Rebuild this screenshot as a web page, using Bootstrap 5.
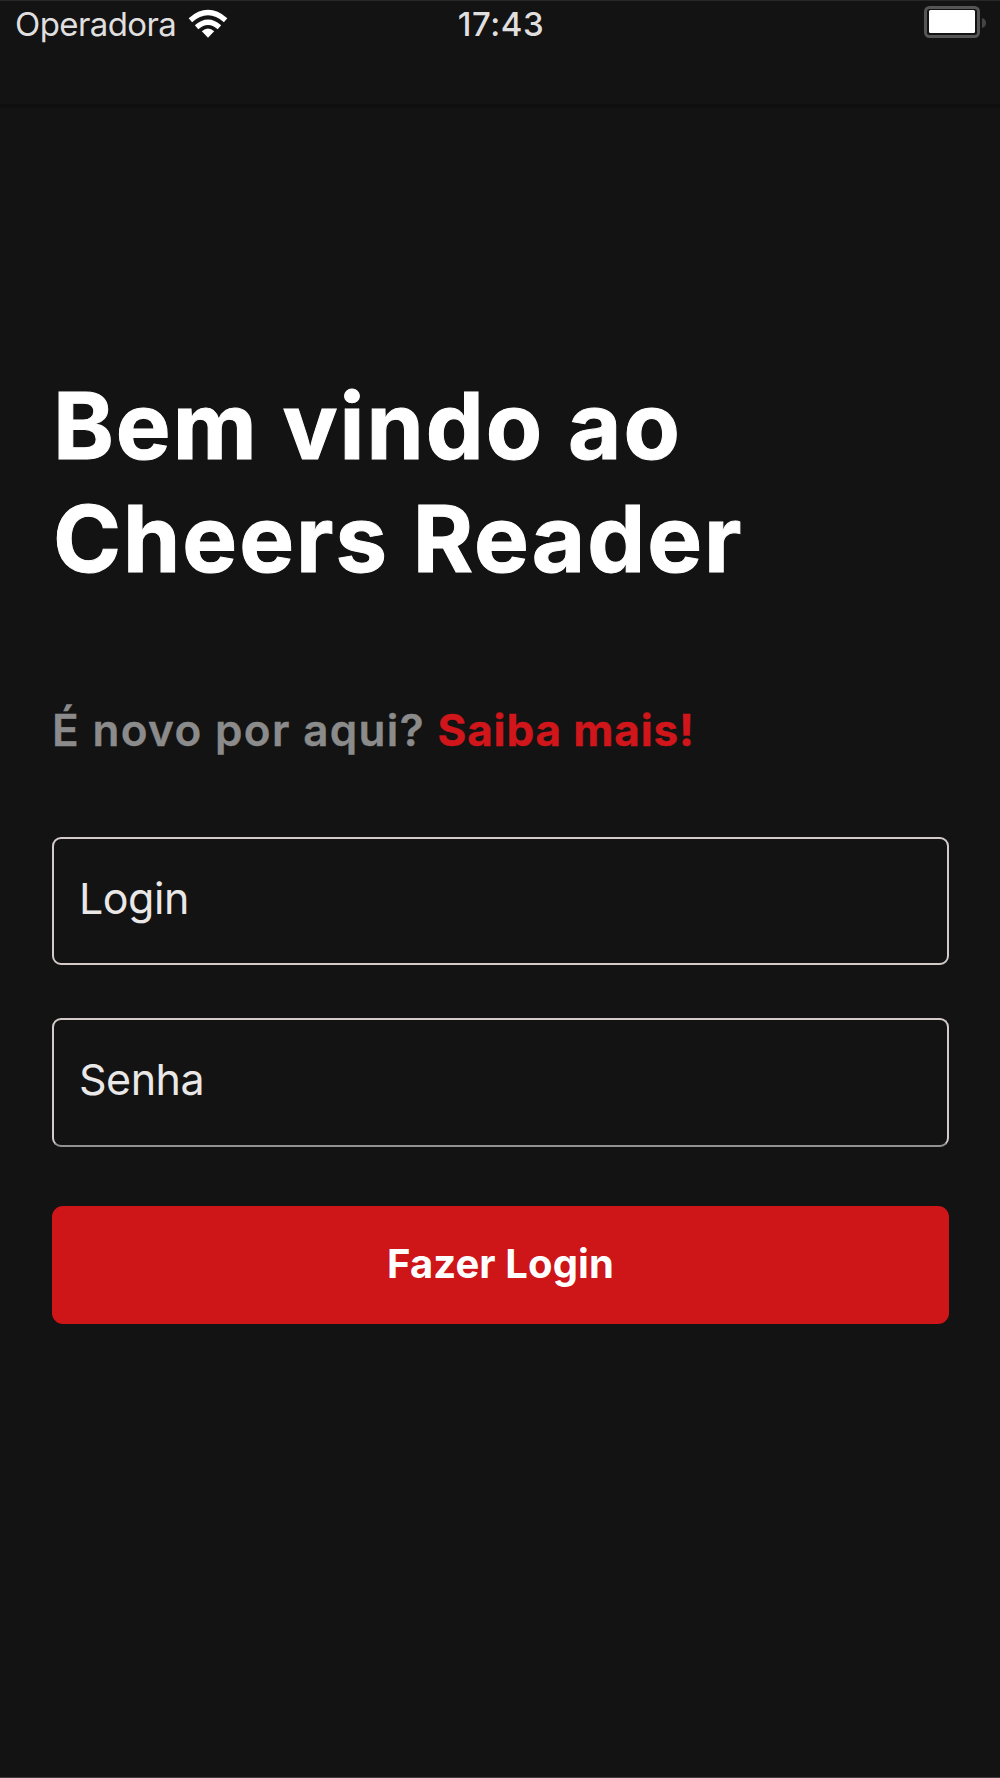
<!DOCTYPE html>
<html lang="pt-BR">
<head>
<meta charset="utf-8">
<meta name="viewport" content="width=device-width, initial-scale=1">
<title>Cheers Reader</title>
<link href="https://cdn.jsdelivr.net/npm/bootstrap@5.3.0/dist/css/bootstrap.min.css" rel="stylesheet">
<style>
  body { background: #131313; color: #fff; font-family: Inter, "Liberation Sans", sans-serif; }
  .screen { height: 1778px; border-top: 1px solid #262828; border-bottom: 1px solid #403c40; overflow: hidden; }
  .status-bar { height: 107px; padding: 3px 13px 0 15px; border-bottom: 4px solid #0f0f0f; font-size: 33px; line-height: 40px; color: #e0dfdf; }
  .carrier { letter-spacing: -.6px; }
  .wifi-icon { margin: 5px 0 0 12px; }
  .clock { font-weight: 500; letter-spacing: .5px; }
  .battery-icon { margin-top: 2px; }
  .login-view { padding: 261px 51px 0 52px; }
  .welcome { font-size: 92px; line-height: 113px; font-weight: 700; letter-spacing: 2px; padding-left: 1px; margin-bottom: 108px; -webkit-text-stroke: 1px #fff; }
  .intro { font-size: 44px; line-height: 54px; font-weight: 600; letter-spacing: 1.35px; color: #8c8b8b; margin-bottom: 80px; -webkit-text-stroke: .4px currentColor; }
  .intro a { color: #d0161a; font-weight: 700; letter-spacing: .9px; }
  .field.form-control { height: 128px; padding: 31px 25px 38px; border: 2px solid #d2cbc9; border-radius: 9px; background: #131313; color: #fff; font-size: 43px; line-height: 52px; letter-spacing: -.5px; }
  .field.form-control::placeholder { color: #eae7e7; opacity: 1; }
  .field-user { margin-bottom: 53px; }
  .field-pass.form-control { height: 129px; margin-bottom: 59px; border-bottom-color: #929292; }
  .btn-login { height: 118px; padding: 0 0 2px; border: 0; border-radius: 11px; background: #ce1518; color: #fff; font-size: 40px; line-height: 48px; font-weight: 700; letter-spacing: .1px; }
</style>
</head>
<body>
<div class="screen">
  <header class="status-bar row g-0 align-items-start">
    <div class="col d-flex align-items-start">
      <span class="carrier">Operadora</span>
      <svg class="wifi-icon" width="40" height="30" viewBox="0 0 42 31" fill="none" stroke="#fff" stroke-width="5.500">
        <path d="M2.500 11.500Q21-4.500 39.500 11.500"/>
        <path d="M9 19Q21 8.500 33 19"/>
        <path d="M14.500 23Q21 17.500 27.500 23L21 30Z" fill="#fff" stroke="none"/>
      </svg>
    </div>
    <div class="col-auto clock">17:43</div>
    <div class="col d-flex justify-content-end">
      <svg class="battery-icon" width="64" height="33" viewBox="0 0 64 33">
        <rect x="2.500" y="1.500" width="53" height="29" rx="4" fill="#131313" stroke="#555" stroke-width="3"/>
        <rect x="6" y="4" width="46" height="23" rx="1.500" fill="#fff"/>
        <path d="M59 12q4 1 4 5t-4 5Z" fill="#444"/>
      </svg>
    </div>
  </header>
  <main class="login-view">
    <h1 class="welcome">Bem vindo ao<br>Cheers Reader</h1>
    <p class="intro">É novo por aqui? <a href="#" class="text-decoration-none">Saiba mais!</a></p>
    <form>
      <input type="text" class="form-control field field-user" placeholder="Login" aria-label="Login">
      <input type="password" class="form-control field field-pass" placeholder="Senha" aria-label="Senha">
      <button type="button" class="btn btn-login w-100">Fazer Login</button>
    </form>
  </main>
</div>
<script src="https://cdn.jsdelivr.net/npm/bootstrap@5.3.0/dist/js/bootstrap.bundle.min.js"></script>
</body>
</html>
